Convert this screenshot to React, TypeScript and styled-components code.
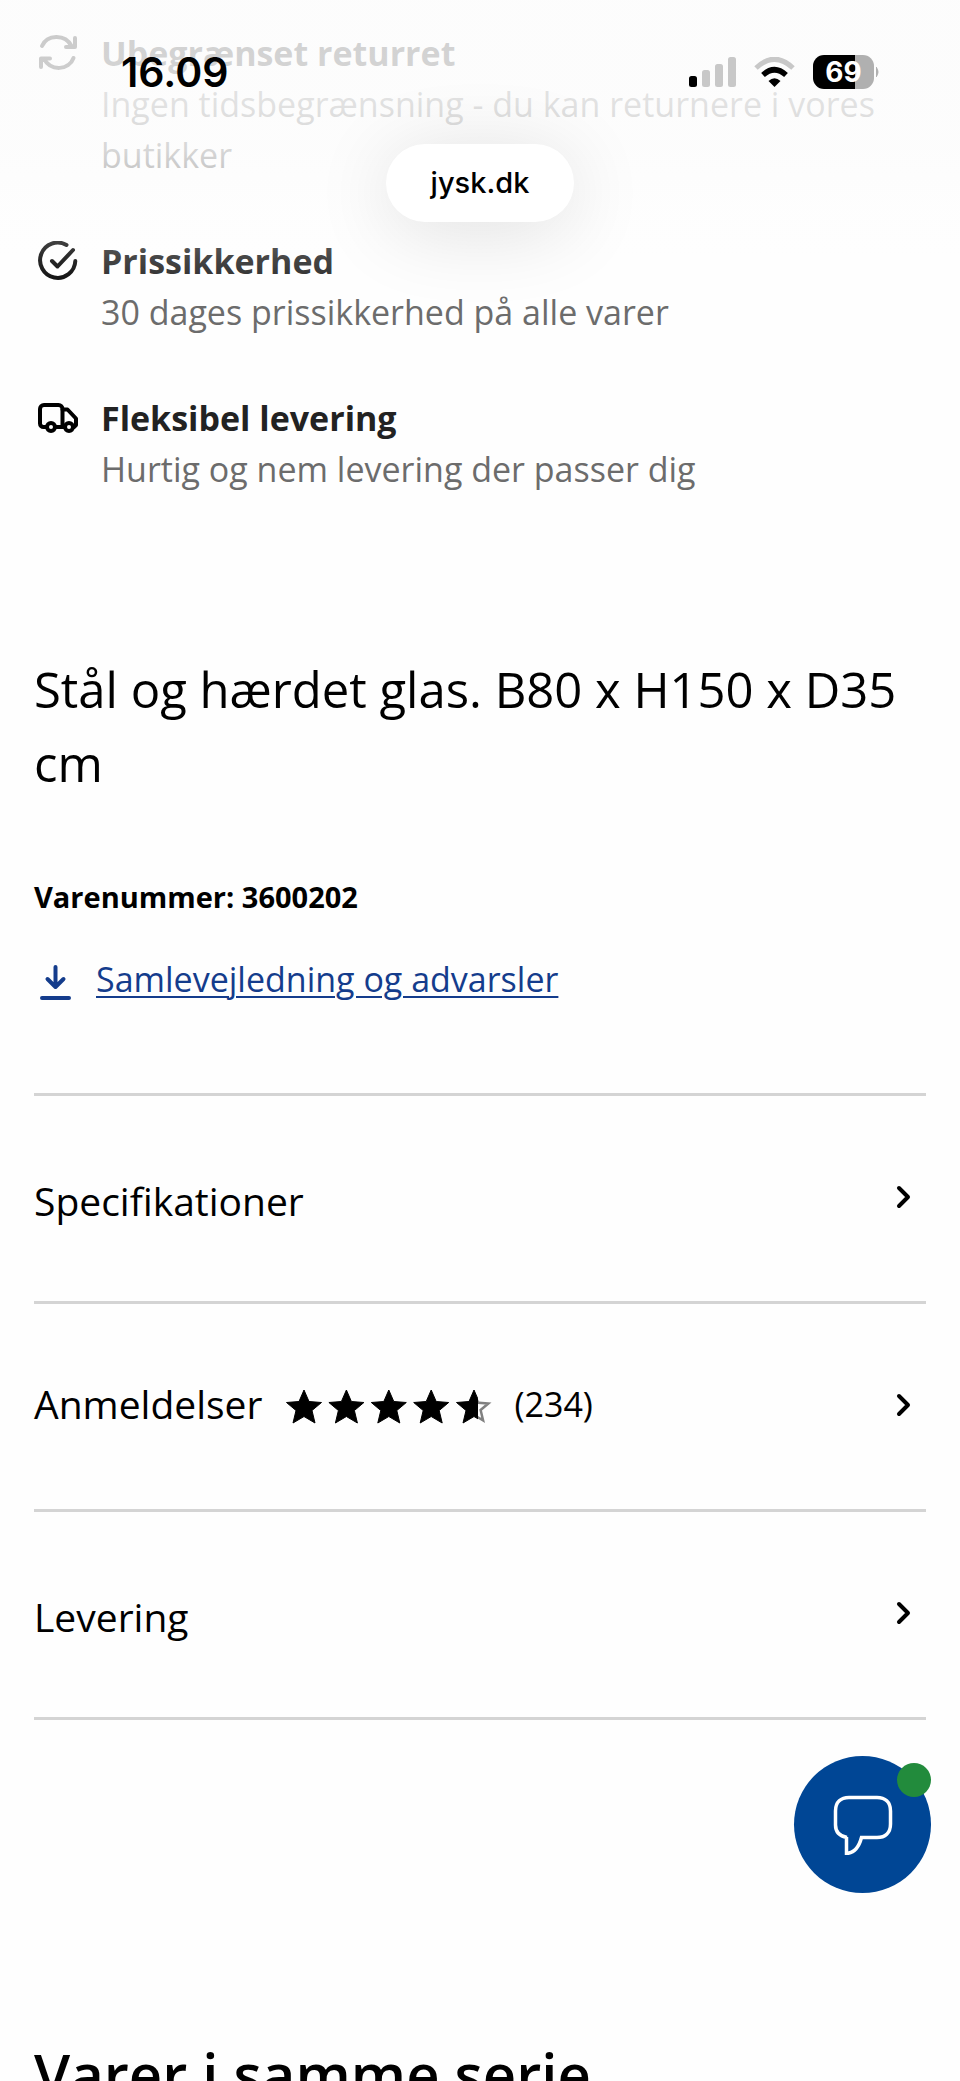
import React from 'react';
import styled, { createGlobalStyle } from 'styled-components';

const GlobalStyle = createGlobalStyle`
  *, *::before, *::after { box-sizing: border-box; }
  body { margin: 0; background: #fefefe; }
  h2, p, ul { margin: 0; padding: 0; }
`;

const Screen = styled.div`
  position: relative;
  height: 100vh;
  overflow: hidden;
  background: #fefefe;
  color: #000;
  font-family: 'Open Sans', sans-serif;
`;

const Page = styled.main`
  height: 100%;
  overflow-y: auto;
  scrollbar-width: none;
  padding: 28px 34px 60px;
`;

const Benefits = styled.ul`
  display: flex;
  flex-direction: column;
  gap: 55px;
  list-style: none;
`;

const Benefit = styled.li`
  display: grid;
  grid-template-columns: 47px 1fr;
  column-gap: 20px;
  font-size: 34px;
  line-height: 51px;
`;

const BenefitIcon = styled.span`
  display: flex;
  align-items: center;
  justify-content: center;
  height: 50px;
`;

const BenefitTitle = styled.p`
  font-weight: 700;
  color: #222;
`;

const BenefitText = styled.p`
  color: #6c6c6c;
`;

const Description = styled.p`
  margin-top: 157px;
  font-size: 49px;
  line-height: 74px;
`;

const ItemNumber = styled.p`
  margin-top: 75px;
  font-size: 29px;
  line-height: 44px;
  font-weight: 700;
`;

const Download = styled.a`
  display: flex;
  align-items: center;
  gap: 20px;
  width: fit-content;
  margin-top: 34px;
  padding-left: 2px;
  font-size: 34px;
  line-height: 52px;
  color: #143c8c;
  text-decoration: underline;
  text-decoration-thickness: 2px;
  text-underline-offset: 4px;
`;

const Accordion = styled.div`
  margin-top: 88px;
  border-top: 3px solid #d4d4d4;
`;

const AccordionRow = styled.button`
  display: flex;
  align-items: center;
  width: 100%;
  height: 208px;
  padding: 0 15px 0 0;
  border: 0;
  border-bottom: 3px solid #d4d4d4;
  background: none;
  color: inherit;
  font: inherit;
  font-size: 39px;
  line-height: 60px;
  text-align: left;
  cursor: pointer;
`;

const RowLabel = styled.span<{ $rated?: boolean }>`
  padding: ${(p) => (p.$rated ? '0 0 6px' : '4px 0 0')};
`;

const RowChevron = styled.svg`
  margin: 0 0 3px auto;
`;

const Rating = styled.span`
  display: flex;
  align-items: center;
  gap: 22px;
  margin-left: 24px;
  font-size: 34px;
  line-height: 52px;
`;

const RatingCount = styled.span`
  padding-bottom: 6px;
`;

const Series = styled.h2`
  margin-top: 314px;
  font-size: 58px;
  line-height: 80px;
  font-weight: 600;
`;

const TopFade = styled.div`
  position: absolute;
  inset: 0 0 auto;
  height: 300px;
  pointer-events: none;
  background: linear-gradient(
    rgba(252, 252, 252, 0.8) 0,
    rgba(252, 252, 252, 0.82) 100px,
    rgba(252, 252, 252, 0.74) 150px,
    rgba(253, 253, 253, 0.45) 205px,
    rgba(254, 254, 254, 0.16) 258px,
    rgba(254, 254, 254, 0) 300px
  );
`;

const BrowserTop = styled.header`
  position: absolute;
  inset: 0 0 auto;
  display: flex;
  flex-direction: column;
  align-items: center;
  font-family: Inter, sans-serif;
`;

const StatusBar = styled.div`
  display: flex;
  align-items: center;
  justify-content: space-between;
  width: 100%;
  padding: 47px 80px 0 121px;
`;

const Clock = styled.time`
  font-size: 41px;
  line-height: 50px;
  font-weight: 600;
`;

const StatusIcons = styled.div`
  display: flex;
  align-items: center;
`;

const Wifi = styled.svg`
  margin: 0 18px;
`;

const Battery = styled.span`
  display: flex;
  align-items: center;
  gap: 2px;
`;

const BatteryBody = styled.span`
  width: 61px;
  height: 34px;
  border-radius: 11px;
  background: linear-gradient(90deg, #000 69%, #b0b0b0 69%);
  color: #fff;
  font-size: 28px;
  line-height: 34px;
  font-weight: 700;
  text-align: center;
`;

const AddressPill = styled.button`
  height: 78px;
  margin-top: 47px;
  padding: 0 45px;
  border: 0;
  border-radius: 39px;
  background: #fff;
  box-shadow: 0 10px 80px rgba(0, 0, 0, 0.12);
  color: #000;
  font: 500 29px/36px Inter, sans-serif;
  cursor: pointer;
`;

const ChatButton = styled.button`
  position: absolute;
  right: 29px;
  bottom: 188px;
  display: flex;
  align-items: center;
  justify-content: center;
  width: 137px;
  height: 137px;
  padding: 0;
  border: 0;
  border-radius: 50%;
  background: #004695;
  cursor: pointer;
`;

const OnlineDot = styled.span`
  position: absolute;
  top: 7px;
  right: 0;
  width: 34px;
  height: 34px;
  border-radius: 50%;
  background: #228b3c;
`;

const strokeProps = {
  fill: 'none',
  stroke: 'currentColor',
  strokeLinecap: 'round' as const,
  strokeLinejoin: 'round' as const,
};

const ReturnIcon = () => (
  <svg width="40" height="40" viewBox="0 0 40 40" {...strokeProps} strokeWidth="4" aria-hidden="true">
    <path d="M4 13C9 1.500 27 .5 33.500 13M37 5v9h-9" />
    <path d="M35.500 25C31 37.500 13 38.500 6 26M3 34v-8.500h9" />
  </svg>
);

const CheckIcon = () => (
  <svg width="40" height="40" viewBox="0 0 40 40" {...strokeProps} strokeWidth="4" aria-hidden="true">
    <path d="M28.500 4A17.600 17.600 0 1 0 37.300 20" />
    <path d="M14 20l5.500 5.500L35 9" />
  </svg>
);

const TruckIcon = () => (
  <svg width="40" height="30" viewBox="0 0 40 30" {...strokeProps} strokeWidth="4" aria-hidden="true">
    <path d="M8 24H5.500A3.500 3.500 0 0 1 2 20.500V6a4 4 0 0 1 4-4h14.500a4 4 0 0 1 4 4v18H18" />
    <path d="M24.500 6.500h5l8.500 9v6.500l-2 2M24.500 24h2" />
    <circle cx="13" cy="24" r="4" />
    <circle cx="31" cy="24" r="4" />
  </svg>
);

const DownloadIcon = () => (
  <svg width="40" height="44" viewBox="0 0 40 44" {...strokeProps} strokeWidth="4" aria-hidden="true">
    <path d="M19.500 10v19M11.500 22l8 8 8-8M6 41h27" />
  </svg>
);

const Chevron = () => (
  <RowChevron width="16" height="24" viewBox="0 0 16 24" {...strokeProps} strokeWidth="4" aria-hidden="true">
    <path d="M4 3l9 9-9 9" />
  </RowChevron>
);

const STAR = 'M18 1l5 11.500 12.500 1-9.500 8 3 12.500L18 27.500 7 34l3-12.500-9.500-8 12.500-1z';

const Stars = () => (
  <svg width="206" height="36" viewBox="0 0 206 36" role="img" aria-label="4,5 ud af 5 stjerner">
    <defs>
      <clipPath id="star-left"><rect width="22" height="36" /></clipPath>
      <clipPath id="star-right"><rect x="22" width="14" height="36" /></clipPath>
      <clipPath id="star-shape"><path d={STAR} /></clipPath>
    </defs>
    {[0, 1, 2, 3].map((i) => (
      <path key={i} d={STAR} transform={`translate(${i * 42.4})`} stroke="#000" strokeLinejoin="round" />
    ))}
    <g transform="translate(170)">
      <path d={STAR} clipPath="url(#star-left)" stroke="#000" strokeLinejoin="round" />
      <g clipPath="url(#star-right)">
        <path d={STAR} clipPath="url(#star-shape)" fill="none" stroke="#808080" strokeWidth="5" />
      </g>
    </g>
  </svg>
);

const benefits = [
  { icon: <ReturnIcon />, title: 'Ubegrænset returret', text: 'Ingen tidsbegrænsning - du kan returnere i vores butikker' },
  { icon: <CheckIcon />, title: 'Prissikkerhed', text: '30 dages prissikkerhed på alle varer' },
  { icon: <TruckIcon />, title: 'Fleksibel levering', text: 'Hurtig og nem levering der passer dig' },
];

export default function App() {
  return (
    <Screen>
      <GlobalStyle />
      <Page>
        <Benefits>
          {benefits.map((b) => (
            <Benefit key={b.title}>
              <BenefitIcon>{b.icon}</BenefitIcon>
              <div>
                <BenefitTitle>{b.title}</BenefitTitle>
                <BenefitText>{b.text}</BenefitText>
              </div>
            </Benefit>
          ))}
        </Benefits>
        <Description>Stål og hærdet glas. B80 x H150 x D35 cm</Description>
        <ItemNumber>Varenummer: 3600202</ItemNumber>
        <Download href="#samlevejledning">
          <DownloadIcon />
          Samlevejledning og advarsler
        </Download>
        <Accordion>
          <AccordionRow type="button">
            <RowLabel>Specifikationer</RowLabel>
            <Chevron />
          </AccordionRow>
          <AccordionRow type="button">
            <RowLabel $rated>Anmeldelser</RowLabel>
            <Rating>
              <Stars />
              <RatingCount>(234)</RatingCount>
            </Rating>
            <Chevron />
          </AccordionRow>
          <AccordionRow type="button">
            <RowLabel>Levering</RowLabel>
            <Chevron />
          </AccordionRow>
        </Accordion>
        <Series>Varer i samme serie</Series>
      </Page>

      <TopFade />
      <BrowserTop>
        <StatusBar>
          <Clock>16.09</Clock>
          <StatusIcons>
            <svg width="47" height="30" viewBox="0 0 47 30" aria-hidden="true">
              <rect y="19" width="8" height="11" rx="2.500" />
              <rect x="13" y="13" width="8" height="17" rx="2.500" fill="#c8c8c8" />
              <rect x="26" y="7" width="8" height="23" rx="2.500" fill="#c8c8c8" />
              <rect x="39" width="8" height="30" rx="2.500" fill="#c8c8c8" />
            </svg>
            <Wifi width="41" height="30" viewBox="0 0 41 30" fill="none" aria-hidden="true">
              <path d="M2 11Q20.500-6.500 39 11" stroke="#c8c8c8" strokeWidth="5" />
              <path d="M9 18Q20.500 7.500 32 18" stroke="#000" strokeWidth="5.500" />
              <path d="M14.500 24Q20.500 18.500 26.500 24L20.500 30z" fill="#000" />
            </Wifi>
            <Battery>
              <BatteryBody>69</BatteryBody>
              <svg width="4" height="12" viewBox="0 0 4 12" aria-hidden="true">
                <path d="M0 1q4 5 0 10z" fill="#b0b0b0" stroke="#b0b0b0" />
              </svg>
            </Battery>
          </StatusIcons>
        </StatusBar>
        <AddressPill type="button">jysk.dk</AddressPill>
      </BrowserTop>

      <ChatButton type="button" aria-label="Chat">
        <svg width="60" height="60" viewBox="0 0 60 60" fill="none" stroke="#fff" strokeWidth="3.500" aria-hidden="true">
          <path d="M14 42.500C6 41 2.500 36 2.500 30V16C2.500 7 8 2.500 16 2.500H44C52 2.500 57.500 7 57.500 16V29C57.500 38 52 42.500 44 42.500H28.500C26 52 21 58 13.500 58.500V42" />
        </svg>
        <OnlineDot />
      </ChatButton>
    </Screen>
  );
}
